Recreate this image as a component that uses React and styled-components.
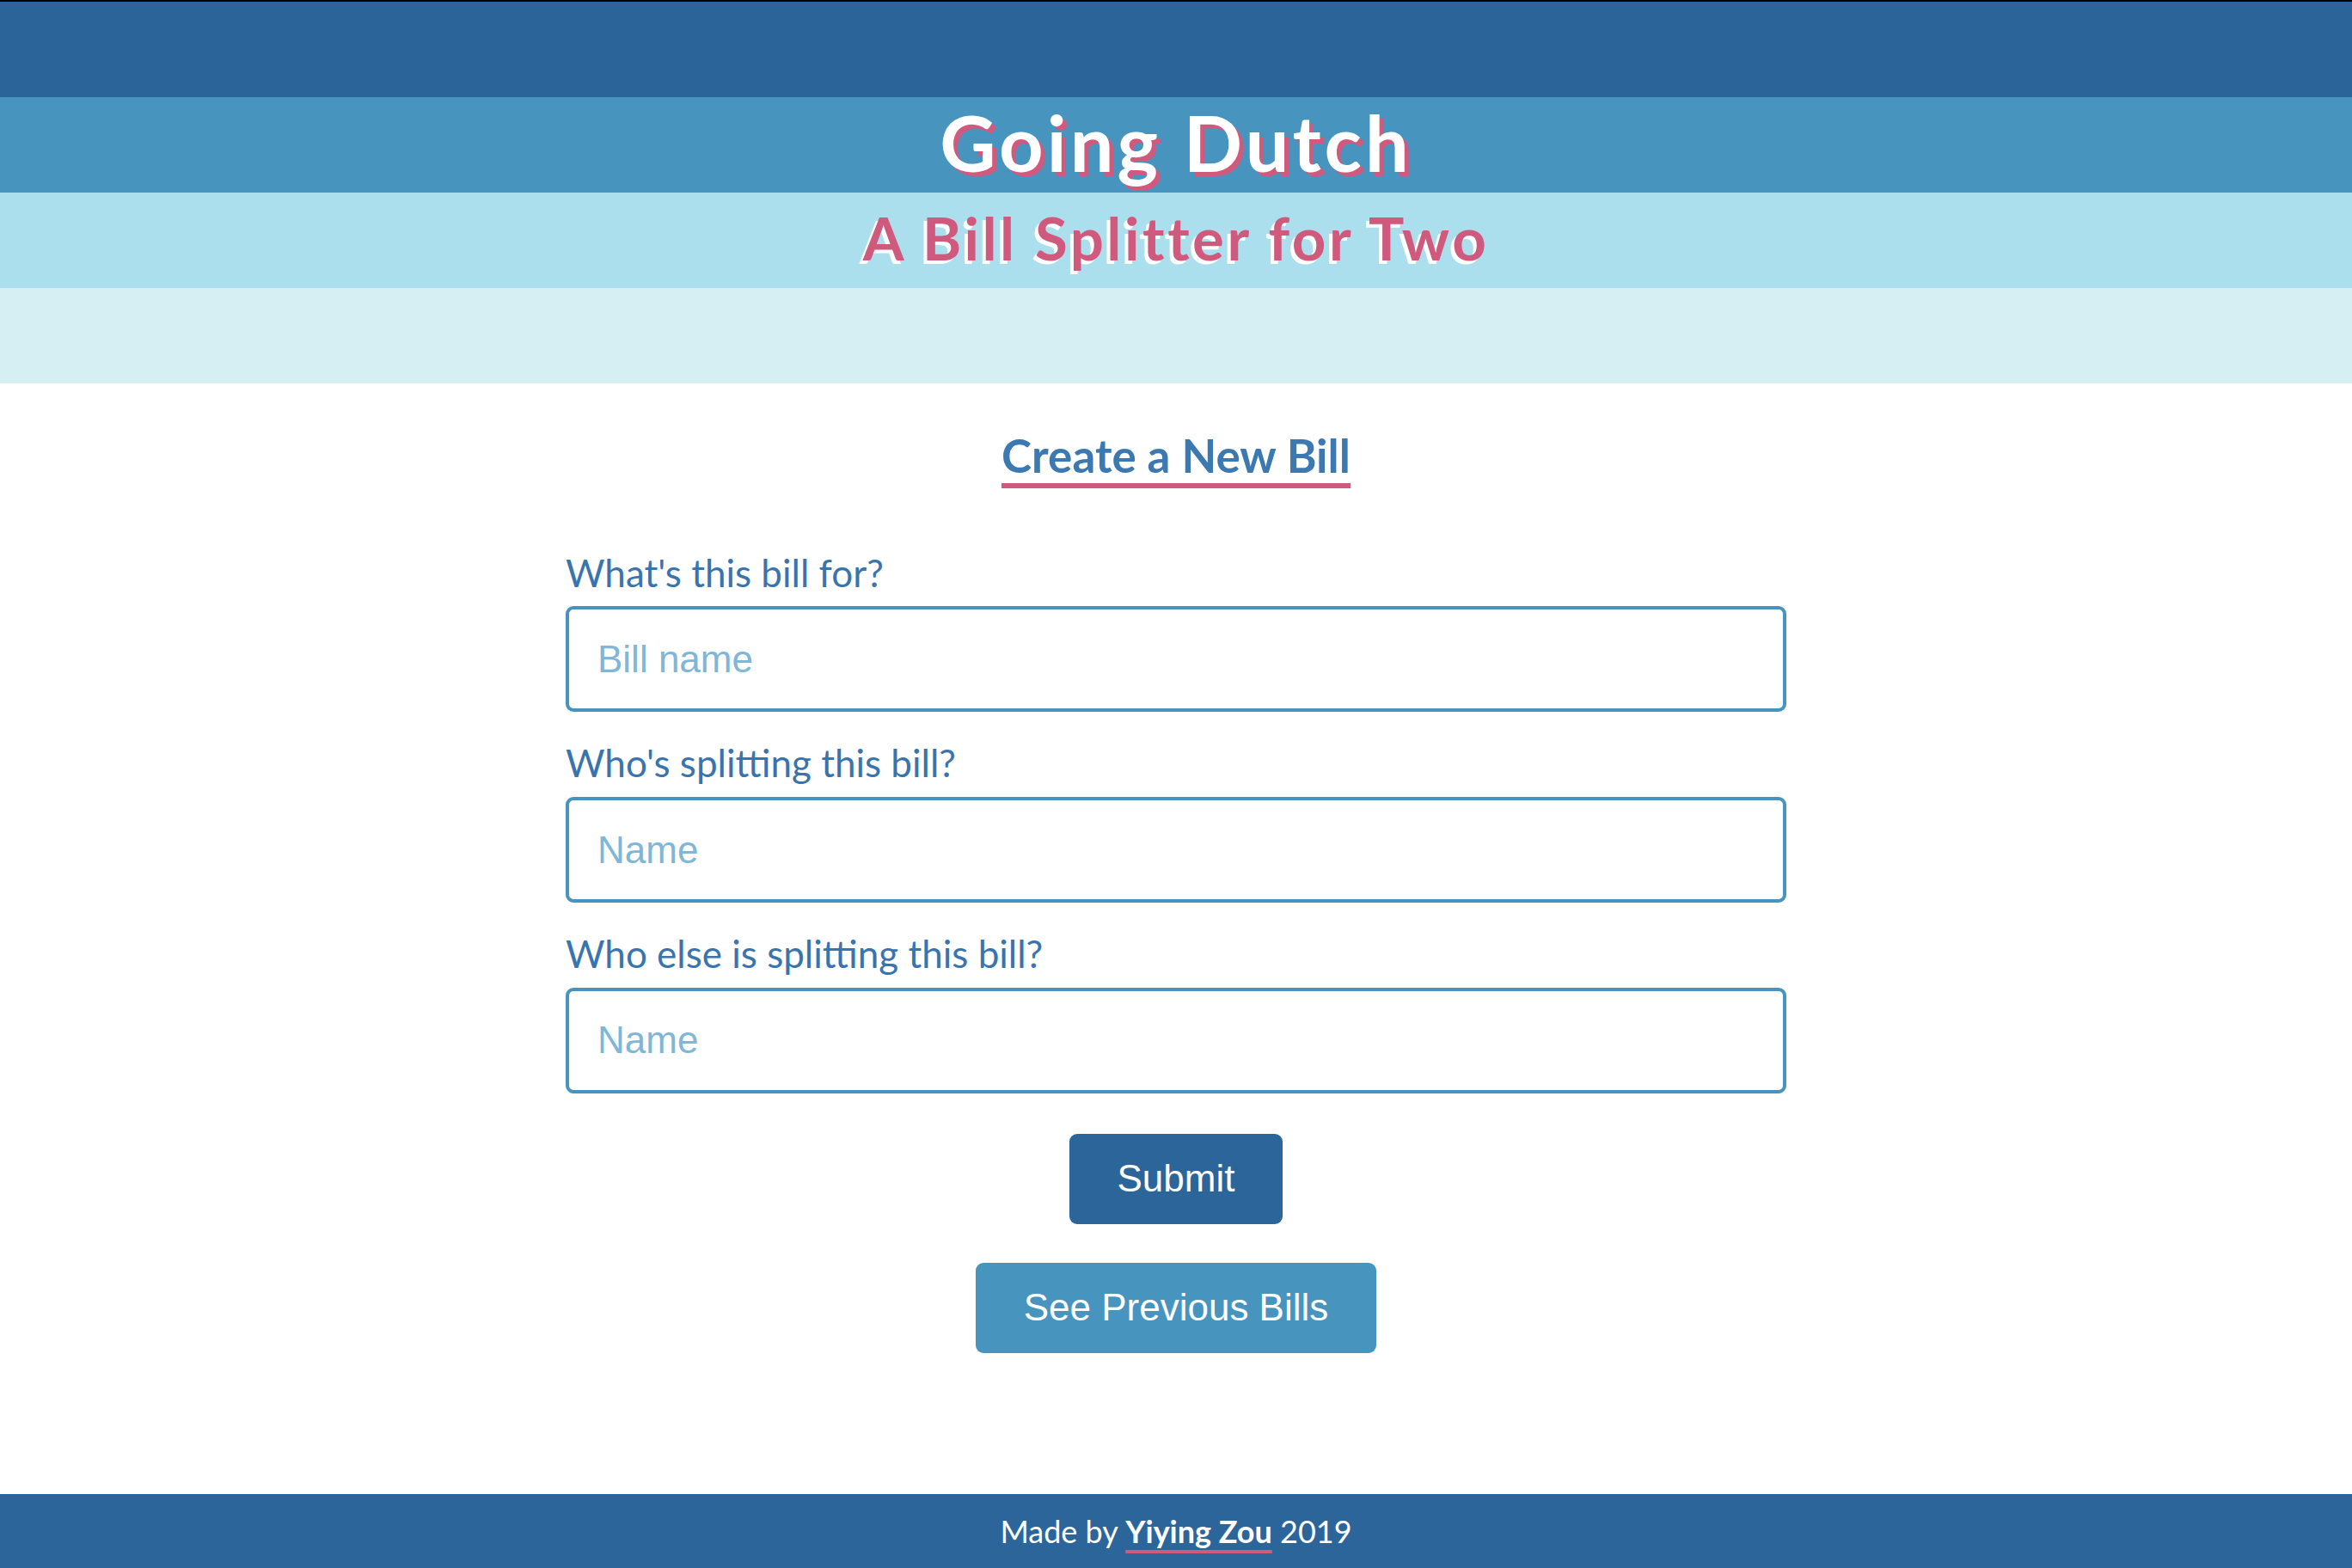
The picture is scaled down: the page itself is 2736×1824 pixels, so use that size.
import React from "react";
import styled, { createGlobalStyle } from "styled-components";

const GlobalStyle = createGlobalStyle`
  html, body {
    margin: 0;
    padding: 0;
  }
  body {
    font-family: Lato, "Open Sans", sans-serif;
    background: #ffffff;
  }
  * {
    box-sizing: border-box;
  }
`;

const fields = [
  { label: "What's this bill for?", placeholder: "Bill name" },
  { label: "Who's splitting this bill?", placeholder: "Name" },
  { label: "Who else is splitting this bill?", placeholder: "Name" },
];

export default function App() {
  return (
    <Page>
      <GlobalStyle />
      <Header>
        <Stripe color="#2b6499" />
        <Stripe color="#4794bf">
          <Title>Going Dutch</Title>
        </Stripe>
        <Stripe color="#abdfed">
          <Subtitle>A Bill Splitter for Two</Subtitle>
        </Stripe>
        <Stripe color="#d5eff3" />
      </Header>

      <Main>
        <Heading>Create a New Bill</Heading>
        <Form onSubmit={(e) => e.preventDefault()}>
          {fields.map((f, i) => (
            <Field key={i}>
              <Label>{f.label}</Label>
              <Input type="text" placeholder={f.placeholder} />
            </Field>
          ))}
          <Button type="submit" variant="dark">
            Submit
          </Button>
          <Button type="button">See Previous Bills</Button>
        </Form>
      </Main>

      <Footer>
        <FooterText>
          Made by <Author>Yiying Zou</Author> 2019
        </FooterText>
      </Footer>
    </Page>
  );
}

const Page = styled.div`
  min-height: 100vh;
  display: flex;
  flex-direction: column;
  border-top: 2px solid #000;
`;

const Header = styled.header`
  display: flex;
  flex-direction: column;
`;

const Stripe = styled.div`
  height: 111px;
  background: ${(p) => p.color};
  display: flex;
  align-items: center;
  justify-content: center;
`;

const Title = styled.h1`
  margin: -7px 0 0;
  font-family: Lato, sans-serif;
  font-weight: 700;
  font-size: 90px;
  letter-spacing: 4px;
  line-height: 1;
  color: #ffffff;
  text-shadow: 5px 5px 0 #d05a7e;
`;

const Subtitle = styled.h2`
  margin: -6px 0 0;
  font-family: Lato, sans-serif;
  font-weight: 700;
  font-size: 69px;
  letter-spacing: 3.5px;
  line-height: 1;
  color: #d05a7e;
  text-shadow: -4px 4px 0 #ffffff;
`;

const Main = styled.main`
  flex: 1;
  display: flex;
  flex-direction: column;
  align-items: center;
  padding-top: 52px;
  padding-bottom: 60px;
`;

const Heading = styled.h3`
  margin: 0;
  font-family: Lato, sans-serif;
  font-weight: 700;
  font-size: 53px;
  line-height: 1.2;
  color: #3d79b1;
  border-bottom: 6px solid #d05a7e;
`;

const Form = styled.form`
  width: 1420px;
  margin-top: 72px;
  display: flex;
  flex-direction: column;
  align-items: center;
`;

const Field = styled.div`
  width: 100%;
  display: flex;
  flex-direction: column;
  gap: 13px;
  margin-bottom: 33px;
`;

const Label = styled.label`
  font-family: Lato, sans-serif;
  font-size: 44px;
  line-height: 1.2;
  color: #3a74ad;
`;

const Input = styled.input`
  width: 100%;
  height: 123px;
  border: 4px solid #4794bf;
  border-radius: 9px;
  padding: 0 33px;
  font-family: "Liberation Sans", Arial, sans-serif;
  font-size: 44px;
  color: #2b6499;
  outline: none;
  &::placeholder {
    color: #80b6d6;
  }
`;

const Button = styled.button`
  height: 105px;
  padding: 0 56px;
  border: none;
  border-radius: 9px;
  background: ${(p) => (p.variant === "dark" ? "#2c6599" : "#4794bf")};
  color: #ffffff;
  font-family: "Liberation Sans", Arial, sans-serif;
  font-size: 44px;
  cursor: pointer;
  margin-top: ${(p) => (p.variant === "dark" ? "14px" : "45px")};
`;

const Footer = styled.footer`
  height: 86px;
  background: #2c6599;
  display: flex;
  align-items: center;
  justify-content: center;
`;

const FooterText = styled.p`
  margin: 0;
  color: #ffffff;
  font-family: Lato, sans-serif;
  font-size: 36px;
`;

const Author = styled.a`
  font-weight: 700;
  color: #ffffff;
  text-decoration: underline;
  text-decoration-color: #d05a7e;
  text-decoration-thickness: 4px;
  text-underline-offset: 8px;
`;
